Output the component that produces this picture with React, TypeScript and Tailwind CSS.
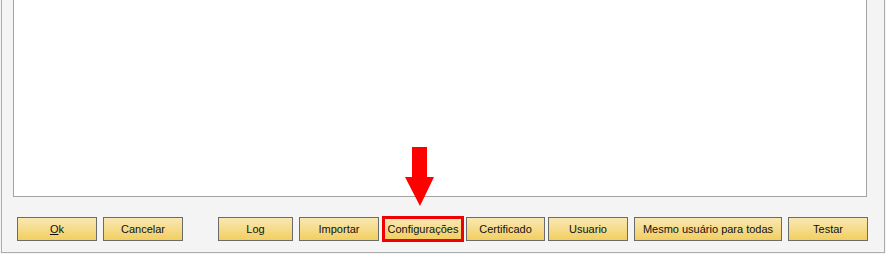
import React from "react";

type Btn = { label: React.ReactNode; w: string; ml: string };

const font = { fontFamily: '"Liberation Sans", Arial, sans-serif' };

const buttons: Btn[] = [
  { label: <><span className="underline">O</span>k</>, w: "w-[80px]", ml: "ml-[15px]" },
  { label: "Cancelar", w: "w-[80px]", ml: "ml-[6px]" },
  { label: "Log", w: "w-[75px]", ml: "ml-[35px]" },
  { label: "Importar", w: "w-[80px]", ml: "ml-[6px]" },
];

const rest: Btn[] = [
  { label: "Certificado", w: "w-[79px]", ml: "ml-[2px]" },
  { label: "Usuario", w: "w-[80px]", ml: "ml-[3px]" },
  { label: "Mesmo usuário para todas", w: "w-[148px]", ml: "ml-[6px]" },
  { label: "Testar", w: "w-[80px]", ml: "ml-[6px]" },
];

const YellowButton = ({ label, w, ml }: Btn) => (
  <button
    className={`${w} ${ml} h-[24px] shrink-0 border border-[#6b6b6b] bg-gradient-to-b from-[#f9e7b1] to-[#f2cf5e] text-[11px] text-[#111] flex items-center justify-center`}
  >
    {label}
  </button>
);

const App: React.FC = () => {
  return (
    <div className="relative w-[886px] h-[254px] bg-[#f4f4f4] overflow-hidden" style={font}>
      {/* outer dialog frame */}
      <div className="ml-[1px] w-[884px] h-[253px] border-x border-b border-[#acacac] flex flex-col">
        {/* white list panel */}
        <div className="ml-[11px] w-[854px] h-[197px] bg-white border-x border-b border-[#a3a3a3]" />

        {/* button row */}
        <div className="flex items-center mt-[19px]">
          {buttons.map((b, i) => (
            <YellowButton key={i} {...b} />
          ))}
          <div className="ml-[3px] w-[82px] h-[26px] shrink-0 border-[3px] border-[#f00000] bg-gradient-to-b from-[#f9e7b1] to-[#f2cf5e] text-[11px] text-[#111] flex items-center justify-center">
            Configurações
          </div>
          {rest.map((b, i) => (
            <YellowButton key={i} {...b} />
          ))}
        </div>
      </div>

      {/* red pointer arrow */}
      <svg className="absolute left-[405px] top-[147px]" width="30" height="60" viewBox="0 0 30 60">
        <polygon points="7,0 22,0 22,30 29,30 15,59 0,30 7,30" fill="#ff0000" />
      </svg>
    </div>
  );
};

export default App;
